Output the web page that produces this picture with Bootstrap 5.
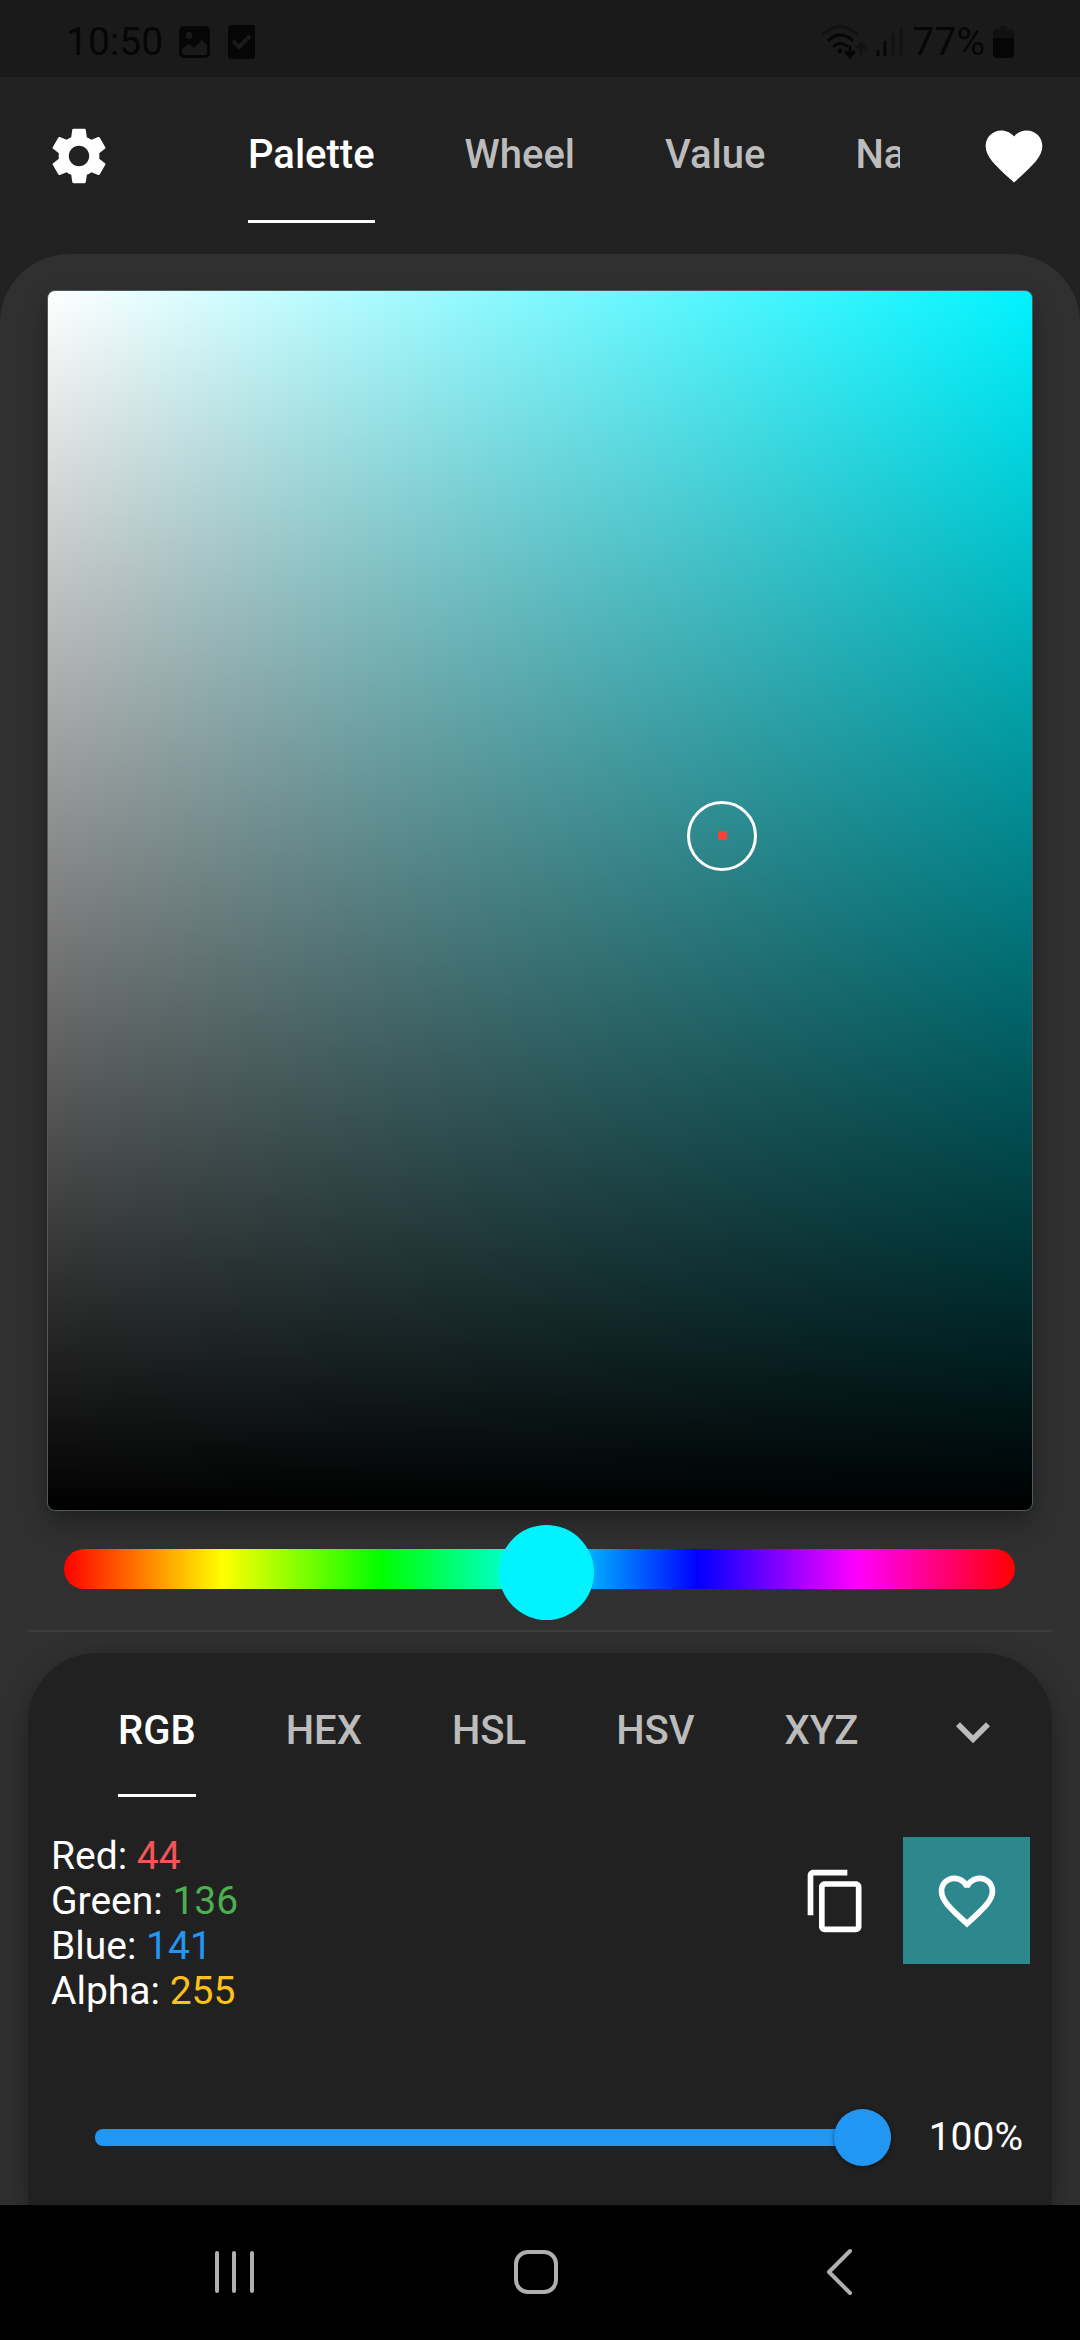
<!DOCTYPE html>
<html lang="en" data-bs-theme="dark">
<head>
<meta charset="utf-8">
<meta name="viewport" content="width=device-width, initial-scale=1">
<title>Color picker</title>
<link rel="stylesheet" href="https://cdn.jsdelivr.net/npm/bootstrap@5.3.0/dist/css/bootstrap.min.css">
<style>
  :root { --surface: #212121; --panel: #303030; --muted: #bcbcbc; --hue: #00f3ff; --picked: #2c888d; --accent: #2196f3; }
  body { font-family: Roboto, "Liberation Sans", sans-serif; font-size: 39px; line-height: 45px; color: #fff; background: var(--surface); }
  svg { display: block; flex: none; }
  .icon { width: 68px; height: 68px; fill: currentColor; }
  .icon-btn { padding: 0; border: 0; border-radius: 0; color: #fff; line-height: 1; }

  .status-bar { height: 77px; padding: 7px 66px 0 66px; background: #1a1a1a; color: #060606; }
  .app-header { display: grid; grid-template-columns: 180px minmax(0, 1fr) 180px; height: 177px; }
  .app-header .icon-btn { margin-top: 45px; }
  .settings { padding-left: 45px; }
  .tab-strip { gap: 90px; }
  .tab-strip .nav-link { padding: 55px 0 0; border-bottom: 3px solid transparent; border-radius: 0; font-size: 40px; font-weight: 500; line-height: 46px; white-space: nowrap; color: var(--muted); }
  .tab-strip .nav-link.active { color: #fff; border-bottom-color: #fff; }
  .mode-tabs { padding-left: 68px; }
  .mode-tabs .nav-link { padding-bottom: 42px; }
  .format-tabs .nav-link { padding-bottom: 40px; }

  .panel { background: var(--panel); border-radius: 69px 69px 0 0; padding: 36px 28px 0; }
  .field { min-height: 400px; margin: 0 19px; border-radius: 8px; border: 1px solid #4f5a5a;
    background: linear-gradient(to top, #000, transparent) border-box, linear-gradient(to right, #fff, var(--hue)) border-box;
    box-shadow: 0 12px 26px rgba(0,0,0,.32); }
  .reticle { left: 68.5%; top: 44.7%; width: 70px; height: 70px; border: 3px solid #fff; }
  .reticle-dot { width: 9px; height: 9px; background: #f44336; }

  input[type=range] { -webkit-appearance: none; appearance: none; display: block; width: 100%; margin: 0; background: none; }
  .hue-row { padding: 10px 37px 14px 36px; }
  .hue-slider { height: 95px; }
  .hue-slider::-webkit-slider-runnable-track { height: 40px; border-radius: 20px; background: linear-gradient(to right, red, yellow, lime, cyan, blue, magenta, red); }
  .hue-slider::-webkit-slider-thumb { -webkit-appearance: none; width: 95px; height: 95px; margin-top: -24px; border-radius: 50%; background: var(--hue); }
  .rule { height: 2px; background: #3b3b3b; margin-bottom: 21px; }

  .readout { background: var(--surface); border-radius: 69px 69px 0 0; box-shadow: 0 8px 26px rgba(0,0,0,.35); }
  .format-row { padding: 0 45px 0 90px; }
  .format-row .icon-btn { margin-top: 45px; }
  .channels { padding: 37px 22px 0 23px; }
  .red { color: #f55555; } .green { color: #4caf50; } .blue { color: var(--accent); } .amber { color: #fcc21b; }
  .actions { gap: 33px; margin-top: 3px; }
  .swatch { width: 127px; height: 127px; background: var(--picked); }
  .swatch:hover { background: var(--picked); }
  .alpha-row { padding: 94px 29px 39px 67px; gap: 38px; }
  .alpha-slider { height: 58px; }
  .alpha-slider::-webkit-slider-runnable-track { height: 17px; border-radius: 8px; background: var(--accent); }
  .alpha-slider::-webkit-slider-thumb { -webkit-appearance: none; width: 57px; height: 57px; margin-top: -20px; border-radius: 50%; background: var(--accent); box-shadow: 0 1px 4px rgba(0,0,0,.5); }

  .system-nav { height: 135px; background: #000; padding: 0 190px 2px; }
  .system-nav .icon-btn { color: #b0b0b0; }
  .system-nav svg { width: 90px; height: 60px; fill: none; stroke: currentColor; stroke-width: 4; stroke-linecap: round; stroke-linejoin: round; }
</style>
<script src="https://cdn.jsdelivr.net/npm/bootstrap@5.3.0/dist/js/bootstrap.bundle.min.js"></script>
</head>
<body>
<div class="d-flex flex-column min-vh-100">
  <div class="status-bar d-flex align-items-center justify-content-between">
    <div class="d-flex align-items-center">
      <span>10:50</span>
      <svg class="ms-3" width="31" height="32" viewBox="0 0 31 32"><path fill="currentColor" fill-rule="evenodd" d="M5 0h21a5 5 0 0 1 5 5v22a5 5 0 0 1-5 5H5a5 5 0 0 1-5-5V5a5 5 0 0 1 5-5zM10 6a3.500 3.500 0 1 0 0 7 3.500 3.500 0 0 0 0-7zM3 23v3a3 3 0 0 0 3 3h19a3 3 0 0 0 3-3v-7l-5-5-8 8-5-4z"/></svg>
      <svg class="ms-3" width="30" height="34" viewBox="0 0 30 34"><rect x="2" width="27" height="34" rx="3" fill="currentColor"/><path d="m7 16 6 6 11-11" fill="none" stroke="#1a1a1a" stroke-width="4"/></svg>
    </div>
    <div class="d-flex align-items-center">
      <svg width="84" height="34" viewBox="0 0 84 34" fill="none" stroke="currentColor" stroke-width="3" stroke-linecap="round"><path stroke="#121212" d="M2 9q17-15 34 0M40 29V20m-4 3 4-4 4 4M72 10v20M80 4v26"/><path d="M8 15q11-10 23 0M13 21q6-5 13 0"/><circle cx="19" cy="26" r="1"/><path d="M29 22v9m-4-4 4 5 4-5M57 26v4M64 17v13"/></svg>
      <span class="ms-2 me-2">77%</span>
      <svg width="21" height="32" viewBox="0 0 21 32"><path fill="#111" d="M7 0h7v3h3a4 4 0 0 1 4 4v7H0V7a4 4 0 0 1 4-4h3z"/><path fill="currentColor" d="M0 12h21v16a4 4 0 0 1-4 4H4a4 4 0 0 1-4-4z"/></svg>
    </div>
  </div>

  <header class="app-header">
    <div class="settings d-flex align-items-start"><button class="btn icon-btn" type="button" aria-label="Settings"><svg class="icon" viewBox="0 0 24 24"><path d="M19.140 12.940c.04-.3.06-.61.06-.94 0-.32-.02-.64-.07-.94l2.030-1.580c.18-.14.23-.41.12-.61l-1.920-3.320c-.12-.22-.37-.29-.59-.22l-2.390.96c-.5-.38-1.030-.7-1.620-.94l-.36-2.540c-.04-.24-.24-.41-.48-.41h-3.840c-.24 0-.43.17-.47.41l-.36 2.540c-.59.24-1.130.57-1.620.94l-2.390-.96c-.22-.08-.47 0-.59.22L2.740 8.870c-.12.21-.08.47.12.61l2.030 1.580c-.05.3-.07.63-.07.94s.02.64.07.94l-2.030 1.580c-.18.14-.23.41-.12.61l1.920 3.320c.12.22.37.29.59.22l2.390-.96c.5.38 1.030.7 1.620.94l.36 2.540c.05.24.24.41.48.41h3.840c.24 0 .44-.17.47-.41l.36-2.540c.59-.24 1.130-.56 1.620-.94l2.390.96c.22.08.47 0 .59-.22l1.920-3.320c.12-.22.07-.47-.12-.61l-2.010-1.580zM12 15.600c-1.980 0-3.600-1.620-3.600-3.600s1.620-3.600 3.600-3.600 3.600 1.620 3.600 3.600-1.620 3.600-3.600 3.600z"/></svg></button></div>
    <nav class="nav tab-strip mode-tabs flex-nowrap overflow-hidden align-items-start">
      <a class="nav-link active" href="#palette">Palette</a>
      <a class="nav-link" href="#wheel">Wheel</a>
      <a class="nav-link" href="#value">Value</a>
      <a class="nav-link" href="#name">Name</a>
    </nav>
    <div class="d-flex align-items-start justify-content-end"><button class="btn icon-btn me-4" type="button" aria-label="Favorites"><svg class="icon me-2" viewBox="0 0 24 24"><path d="m12 21.350-1.450-1.320C5.400 15.360 2 12.280 2 8.500 2 5.420 4.420 3 7.500 3c1.740 0 3.410.81 4.500 2.090C13.090 3.810 14.760 3 16.500 3 19.580 3 22 5.420 22 8.500c0 3.780-3.400 6.860-8.550 11.540z"/></svg></button></div>
  </header>

  <main class="panel flex-grow-1 d-flex flex-column overflow-hidden">
    <div class="field flex-grow-1 position-relative" id="palette">
      <div class="reticle position-absolute translate-middle rounded-circle d-flex align-items-center justify-content-center"><span class="reticle-dot"></span></div>
    </div>
    <div class="hue-row position-relative"><input class="hue-slider" type="range" min="0" max="360" value="183" aria-label="Hue"></div>
    <div class="rule"></div>

    <section class="readout">
      <div class="format-row d-flex align-items-start justify-content-between">
        <nav class="nav tab-strip format-tabs flex-nowrap">
          <a class="nav-link active" href="#rgb">RGB</a>
          <a class="nav-link" href="#hex">HEX</a>
          <a class="nav-link" href="#hsl">HSL</a>
          <a class="nav-link" href="#hsv">HSV</a>
          <a class="nav-link" href="#xyz">XYZ</a>
        </nav>
        <button class="btn icon-btn" type="button" aria-label="More formats"><svg class="icon" viewBox="0 0 24 24" fill="none"><path fill="#bcbcbc" d="M16.590 8.590 12 13.170 7.410 8.590 6 10l6 6 6-6z"/></svg></button>
      </div>
      <div class="channels d-flex align-items-start justify-content-between" id="rgb">
        <div>
          <div>Red: <span class="red">44</span></div>
          <div>Green: <span class="green">136</span></div>
          <div>Blue: <span class="blue">141</span></div>
          <div>Alpha: <span class="amber">255</span></div>
        </div>
        <div class="actions d-flex align-items-center">
          <button class="btn icon-btn" type="button" aria-label="Copy"><svg class="icon" viewBox="0 0 24 24"><path d="M16 1H4c-1.100 0-2 .9-2 2v14h2V3h12V1zm3 4H8c-1.100 0-2 .9-2 2v14c0 1.100.9 2 2 2h11c1.100 0 2-.9 2-2V7c0-1.100-.9-2-2-2zm0 16H8V7h11v14z"/></svg></button>
          <button class="btn icon-btn swatch d-flex align-items-center justify-content-center" type="button" aria-label="Add to favorites"><svg class="icon" viewBox="0 0 24 24"><path d="M16.500 3c-1.740 0-3.410.81-4.500 2.090C10.910 3.810 9.240 3 7.500 3 4.420 3 2 5.420 2 8.500c0 3.780 3.400 6.860 8.550 11.540L12 21.350l1.450-1.320C18.600 15.360 22 12.280 22 8.500 22 5.420 19.580 3 16.500 3zm-4.400 15.550-.1.100-.1-.1C7.140 14.240 4 11.390 4 8.500 4 6.500 5.500 5 7.500 5c1.540 0 3.040.99 3.570 2.360h1.870C13.460 5.990 14.960 5 16.500 5c2 0 3.500 1.500 3.500 3.500 0 2.890-3.140 5.740-7.900 10.050z"/></svg></button>
        </div>
      </div>
      <div class="alpha-row d-flex align-items-center">
        <input class="alpha-slider flex-grow-1" id="alpha" type="range" min="0" max="100" value="100">
        <label for="alpha">100%</label>
      </div>
    </section>
  </main>

  <div class="system-nav d-flex align-items-center justify-content-between">
    <button class="btn icon-btn" type="button" aria-label="Recent apps"><svg viewBox="0 0 90 60"><path d="M27 11v38M44 11v38M62 11v38"/></svg></button>
    <button class="btn icon-btn" type="button" aria-label="Home"><svg viewBox="0 0 90 60"><rect x="21" y="10" width="40" height="40" rx="12"/></svg></button>
    <button class="btn icon-btn" type="button" aria-label="Back"><svg viewBox="0 0 90 60"><path d="M50 9 29 30l21 21"/></svg></button>
  </div>
</div>
</body>
</html>
